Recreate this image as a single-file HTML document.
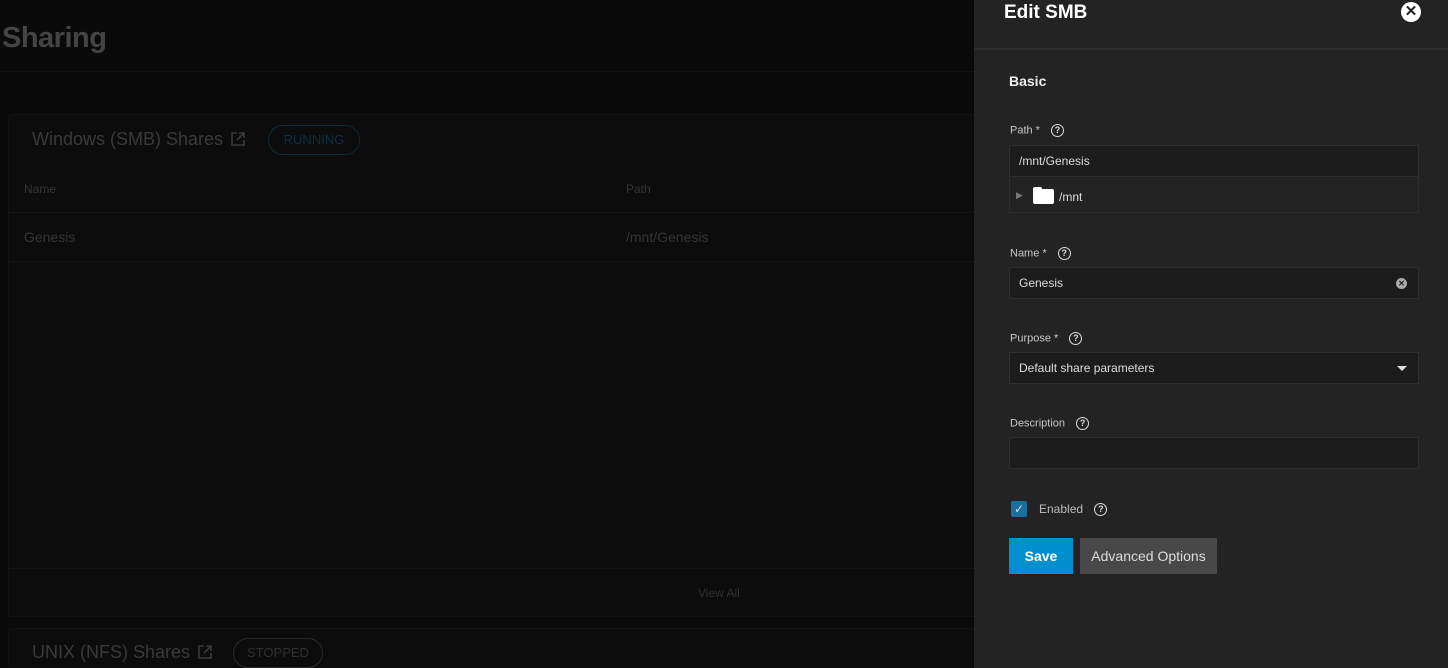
<!DOCTYPE html>
<html><head><style>
*{box-sizing:border-box;margin:0;padding:0}
html,body{width:1448px;height:668px;overflow:hidden}
body{background:#0a0a0a;font-family:"Liberation Sans",sans-serif;position:relative}
.abs{position:absolute}
.left h1{position:absolute;left:2px;top:22px;font-size:29px;font-weight:bold;color:#444;letter-spacing:-0.5px}
.card{position:absolute;background:#0c0c0c;border:1px solid #121212;border-radius:3px}
.pill{position:absolute;border-radius:15px;font-size:13px;text-align:center}
.panel{position:absolute;left:974px;top:0;width:474px;height:668px;background:#232323}
.lbl{position:absolute;left:36px;font-size:11px;color:#c8c8c8}
.q{display:inline-block;width:13px;height:13px;border:1.5px solid #ddd;border-radius:50%;font-size:9px;font-weight:bold;text-align:center;line-height:10px;color:#ddd;margin-left:8px;vertical-align:middle}
.inp{position:absolute;left:35px;width:410px;height:32px;background:#1c1c1c;border:1px solid #2e2e2e;color:#ddd;font-size:12px;padding-left:9px;line-height:30px}
</style></head><body>
<div class="left">
<h1>Sharing</h1>
<div class="abs" style="left:0;top:71px;width:974px;height:1px;background:#121212"></div>
<div class="card" style="left:8px;top:114px;width:980px;height:503px"></div>
<div class="abs" style="left:32px;top:129px;font-size:18px;color:#3a3a3a">Windows (SMB) Shares <svg width="16" height="16" viewBox="0 0 16 16" style="vertical-align:-2px;margin-left:2px"><path d="M7 2H2v12h12V9M9 2h5v5M14 2L7 9" fill="none" stroke="#3a3a3a" stroke-width="1.6"/></svg></div>
<div class="pill" style="left:268px;top:125px;width:92px;height:30px;border:1px solid #0d2a38;color:#0b2f42;line-height:28px">RUNNING</div>
<div class="abs" style="left:24px;top:182px;font-size:12px;color:#363636">Name</div>
<div class="abs" style="left:626px;top:182px;font-size:12px;color:#363636">Path</div>
<div class="abs" style="left:8px;top:212px;width:966px;height:1px;background:#141414"></div>
<div class="abs" style="left:24px;top:229px;font-size:14px;color:#363636">Genesis</div>
<div class="abs" style="left:626px;top:229px;font-size:14px;color:#363636">/mnt/Genesis</div>
<div class="abs" style="left:8px;top:261px;width:966px;height:1px;background:#141414"></div>
<div class="abs" style="left:8px;top:568px;width:966px;height:1px;background:#141414"></div>
<div class="abs" style="left:698px;top:586px;font-size:12px;color:#303030">View All</div>
<div class="card" style="left:8px;top:628px;width:980px;height:40px;border-bottom:none"></div>
<div class="abs" style="left:32px;top:642px;font-size:18px;color:#3a3a3a">UNIX (NFS) Shares <svg width="16" height="16" viewBox="0 0 16 16" style="vertical-align:-2px;margin-left:2px"><path d="M7 2H2v12h12V9M9 2h5v5M14 2L7 9" fill="none" stroke="#3a3a3a" stroke-width="1.6"/></svg></div>
<div class="pill" style="left:233px;top:638px;width:90px;height:30px;border:1px solid #2a2a2a;color:#303030;line-height:28px">STOPPED</div>
</div>
<div class="panel">
<div class="abs" style="left:30px;top:2px;font-size:19px;font-weight:bold;color:#fff">Edit SMB</div>
<div class="abs" style="left:427px;top:2px;width:20px;height:20px;border-radius:50%;background:#fff;color:#232323;font-size:15px;font-weight:bold;text-align:center;line-height:20px">✕</div>
<div class="abs" style="left:0;top:48px;width:474px;height:2px;background:#2c2c2c"></div>
<div class="abs" style="left:35px;top:73px;font-size:14px;font-weight:bold;color:#eee">Basic</div>
<div class="lbl" style="top:124px">Path * <span class="q">?</span></div>
<div class="inp" style="top:145px">/mnt/Genesis</div>
<div class="abs" style="left:35px;top:177px;width:410px;height:36px;border:1px solid #2e2e2e;border-top:none;color:#ddd;font-size:12px">
<span class="abs" style="left:6px;top:13px;font-size:9px;color:#777">▶</span>
<span class="abs" style="left:23px;top:12px;width:21px;height:15px;background:#fff;border-radius:2px"></span>
<span class="abs" style="left:23px;top:10px;width:9px;height:4px;background:#fff;border-radius:2px 2px 0 0"></span>
<span class="abs" style="left:49px;top:13px">/mnt</span></div>
<div class="lbl" style="top:247px">Name * <span class="q">?</span></div>
<div class="inp" style="top:267px">Genesis<span class="abs" style="left:386px;top:10px;width:11px;height:11px;border-radius:50%;background:#aaa;color:#1c1c1c;font-size:8px;line-height:11px;text-align:center;font-weight:bold">✕</span></div>
<div class="lbl" style="top:332px">Purpose * <span class="q">?</span></div>
<div class="inp" style="top:352px">Default share parameters<span class="abs" style="left:387px;top:13px;border-left:5px solid transparent;border-right:5px solid transparent;border-top:5px solid #ddd"></span></div>
<div class="lbl" style="top:417px">Description <span class="q">?</span></div>
<div class="inp" style="top:437px"></div>
<div class="abs" style="left:37px;top:501px;width:16px;height:16px;background:#1a6fa0;border-radius:2px;color:#ddd;font-size:12px;text-align:center;line-height:16px">✓</div>
<div class="abs" style="left:65px;top:502px;font-size:12px;color:#bbb">Enabled <span class="q">?</span></div>
<div class="abs" style="left:35px;top:538px;width:64px;height:36px;background:#0090d0;color:#fff;font-size:14px;font-weight:bold;text-align:center;line-height:36px">Save</div>
<div class="abs" style="left:106px;top:538px;width:137px;height:36px;background:#484848;color:#ddd;font-size:14px;text-align:center;line-height:36px">Advanced Options</div>
</div>
</body></html>
